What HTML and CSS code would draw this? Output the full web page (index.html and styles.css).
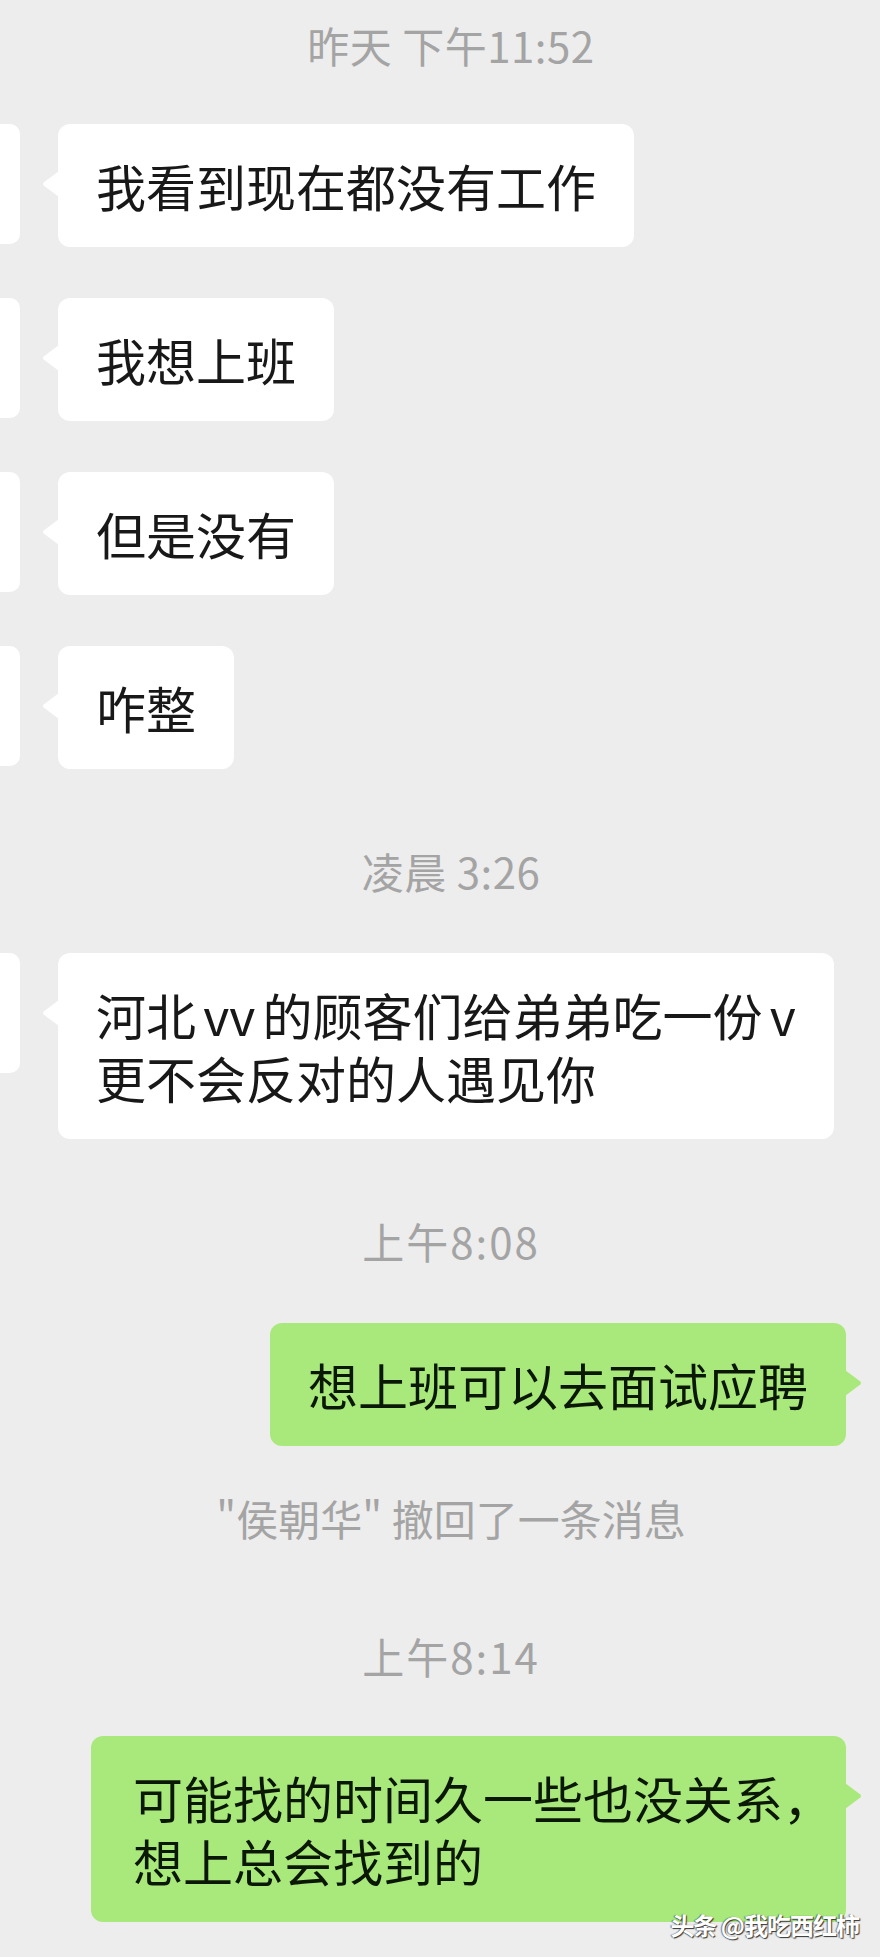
FILE: index.html
```html
<!DOCTYPE html>
<html lang="zh-CN">
<head>
<meta charset="utf-8">
<title>聊天记录</title>
<link rel="stylesheet" href="styles.css">
</head>
<body>
<div class="chat">
  <div class="time first">昨天 下午11:52</div>

  <div class="row left">
    <div class="avatar"></div>
    <div class="bubble white">我看到现在都没有工作</div>
  </div>
  <div class="row left">
    <div class="avatar"></div>
    <div class="bubble white">我想上班</div>
  </div>
  <div class="row left">
    <div class="avatar"></div>
    <div class="bubble white">但是没有</div>
  </div>
  <div class="row left">
    <div class="avatar"></div>
    <div class="bubble white">咋整</div>
  </div>

  <div class="time">凌晨 3:26</div>

  <div class="row left">
    <div class="avatar"></div>
    <div class="bubble white"><span class="line tight">河北 vv 的顾客们给弟弟吃一份 v</span><span class="line">更不会反对的人遇见你</span></div>
  </div>

  <div class="time digits">上午8:08</div>

  <div class="row right">
    <div class="bubble green">想上班可以去面试应聘</div>
  </div>

  <div class="recall">"侯朝华" 撤回了一条消息</div>

  <div class="time digits after-recall">上午8:14</div>

  <div class="row right">
    <div class="bubble green wide"><span class="line">可能找的时间久一些也没关系<span class="halt">，</span></span><span class="line">想上总会找到的</span></div>
  </div>
</div>
<div class="watermark">头条 @我吃西红柿</div>
</body>
</html>
```

FILE: styles.css
```css
html, body {
  margin: 0;
  padding: 0;
}

body {
  width: 880px;
  height: 1957px;
  background: #ededed;
  font-family: "Noto Sans CJK SC", "Noto Sans", sans-serif;
  position: relative;
  overflow: hidden;
}

.chat {
  display: flex;
  flex-direction: column;
  padding-top: 17px;
}

.time,
.recall {
  text-align: center;
  color: #a4a4a4;
  font-size: 42px;
  line-height: 56px;
  height: 56px;
  padding-left: 22px;
}

.time {
  margin: 74px 0 54px;
  letter-spacing: 0.5px;
}

.time.digits {
  letter-spacing: 2px;
}

.time.first {
  margin: 0 0 51px;
}

.recall {
  margin-top: 44px;
}

.time.after-recall {
  margin: 82px 0 52px;
}

.row {
  display: flex;
  align-items: flex-start;
}

.row + .row {
  margin-top: 51px;
}

.row.left {
  justify-content: flex-start;
}

.row.right {
  justify-content: flex-end;
  padding-right: 34px;
}

.avatar {
  flex: none;
  width: 120px;
  height: 120px;
  margin-left: -100px;
  margin-right: 38px;
  background: #ffffff;
  border-radius: 10px;
}

.bubble {
  position: relative;
  font-size: 50px;
  line-height: 63px;
  padding: 30px 38px;
  border-radius: 12px;
  white-space: nowrap;
}

.bubble.wide {
  padding-left: 42px;
}

.bubble .line {
  display: block;
}

.bubble .line.tight {
  word-spacing: -4px;
}

.bubble.white {
  background: #ffffff;
  color: #181818;
}

.bubble.green {
  background: #a9e97b;
  color: #0c1806;
}

.bubble::before {
  content: "";
  position: absolute;
  top: 47px;
  width: 16px;
  height: 26px;
}

.bubble.white::before {
  left: -15px;
  background: #ffffff;
  clip-path: polygon(100% 0, 4% 44%, 0 50%, 4% 56%, 100% 100%);
}

.bubble.green::before {
  right: -15px;
  background: #a9e97b;
  clip-path: polygon(0 0, 96% 44%, 100% 50%, 96% 56%, 0 100%);
}

.halt {
  font-feature-settings: "halt" 1;
}

.watermark {
  position: absolute;
  right: 21px;
  bottom: 17px;
  font-size: 24px;
  line-height: 30px;
  color: #ffffff;
  font-weight: 700;
  text-shadow: 1px 1px 1px #333, -1px 0 1px rgba(0,0,0,0.5);
  letter-spacing: -1px;
}
```
